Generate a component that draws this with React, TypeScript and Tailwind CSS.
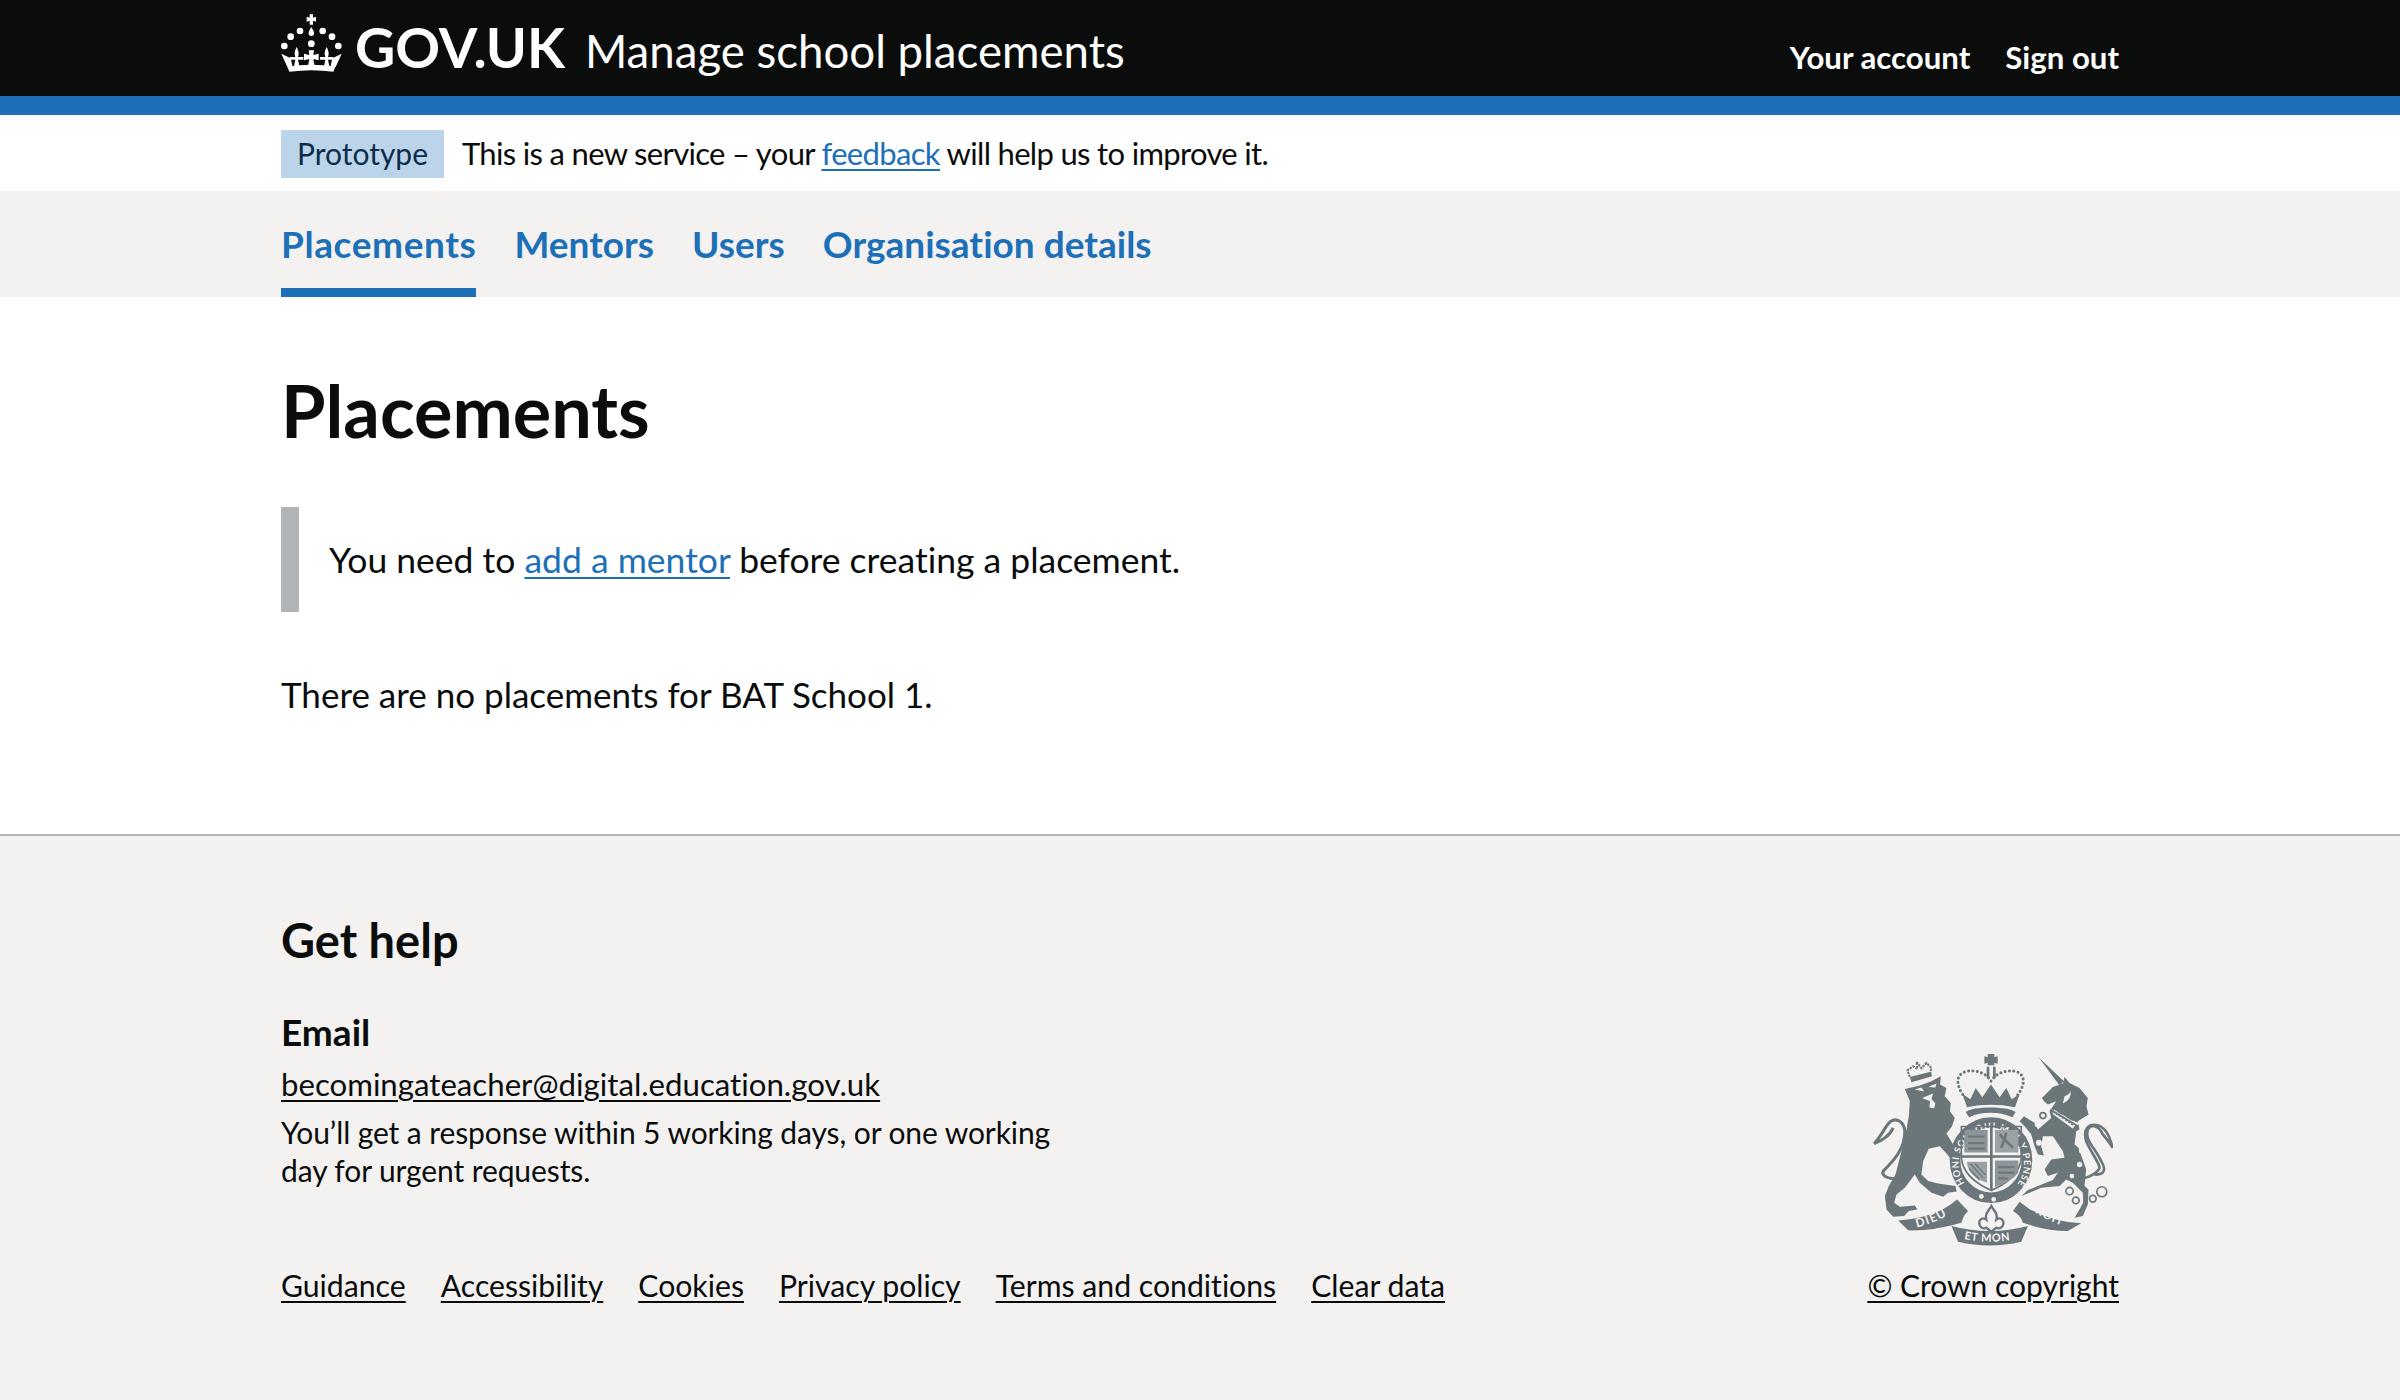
const Crown = () => (
  <svg viewBox="33 39 183 174" className="w-[61px] h-[58px] fill-white shrink-0 mb-[11px]">
    <path d="M119 40h10v10l9-3v15l-9-3v12h-10V59l-9 3V47l9 3z" />
    <path d="M124 78c6 10 8 14 8 19a8 8 0 0 1-16 0c0-5 2-9 8-19z" />
    <circle cx="43" cy="135" r="10" />
    <circle cx="62" cy="107" r="10" />
    <circle cx="90" cy="90" r="10" />
    <circle cx="158" cy="90" r="10" />
    <circle cx="186" cy="107" r="10" />
    <circle cx="205" cy="135" r="10" />
    <circle cx="124" cy="128" r="10" />
    <path d="M52 197Q124 185 196 197L190 212Q124 203 58 212Z" />
    <path d="M34 158L62 172L68 198L52 198Z" />
    <path d="M215 158L187 172L181 198L197 198Z" />
    <path d="M80 138C86 150 88 158 84 168H100V176H84L88 196H72L76 176H60V168H76C72 158 74 150 80 138Z" />
    <path d="M170 138C176 150 178 158 174 168H190V176H174L178 196H162L166 176H150V168H166C162 158 164 150 170 138Z" />
    <path d="M116 148H132L130 162L146 158V178L130 174L134 196H114L118 174L102 178V158L118 162Z" />
  </svg>
);

// royal arms, traced by hand off 3x crops of the picture
const Crest = () => (
  <svg viewBox="70 65 720 580" className="w-[240px] h-[193px] mt-[85px] mr-[6px]" fill="#6b767a">
    <defs>
      <path id="garter" d="M345 457A98 103 0 1 1 505 457" />
      <path id="dieu" d="M195 590Q270 575 325 530" />
      <path id="droit" d="M532 528Q590 572 662 590" />
      <path id="etmon" d="M335 622Q420 642 512 622" />
    </defs>

    {/* lion */}
    <g transform="translate(45 45)">
      <path d="M120 128L165 118L200 105L228 90L226 115L245 125L240 150L258 170L256 195L270 215L262 240L245 262L262 290L285 340L282 352L262 345L248 325L225 300L192 308L175 345L170 385L190 405L220 412L272 420L276 436L250 440L235 452L200 440L165 410L150 385L120 425L95 445L88 470L105 482L150 478L158 490L132 495L118 510L85 512L65 490L60 450L72 420L92 385L105 335L122 265L132 210L135 165Z" />
      <path d="M88 398C60 395 50 385 55 375C85 345 120 310 120 255C118 225 95 215 78 225C60 240 50 270 28 292C50 285 75 268 85 245" fill="none" stroke="#6b767a" strokeWidth="9" />
      <path d="M172 155L205 142L200 158L212 172L208 186L194 184L196 165Z" fill="#f3f2f1" />
      <path d="M150 130L178 136L170 124ZM190 122L215 112L212 124Z" fill="#f3f2f1" />
      <path d="M135 92L128 72L145 60L158 68L155 46L170 66L185 50L200 65L196 82" fill="none" stroke="#6b767a" strokeWidth="6" strokeDasharray="7 3" />
      <path d="M135 92L198 76L202 90L140 108Z" />
    </g>

    {/* unicorn */}
    <g transform="translate(405 45)">
      <path d="M162 33L238 105L225 118Z" />
      <path d="M172 155L205 122L235 112L240 92L255 110L285 125L310 155L306 180L312 205L295 215L280 225L285 250L275 255L270 295L282 305L305 370L300 420L312 430L310 475L295 510L270 515L285 490L296 470L295 440L265 410L245 400L225 420L170 425L135 440L110 450L130 432L160 420L205 402L220 380L190 390L180 370L200 340L240 335L235 315L205 270L175 270L170 300L178 328L160 325L150 300L140 265L120 240L105 225L118 210L150 230L160 250L200 215L195 195L215 165L190 175L178 165Z" />
      <path d="M200 190L206 204L268 250L284 230L260 222L250 216L238 208L225 202L212 192Z" fill="#f3f2f1" />
      <path d="M206 195L268 238" stroke="#6b767a" strokeWidth="5" strokeDasharray="6 5" />
      <path d="M195 192L200 188L282 238L272 256L262 250L272 238L204 198Z" />
      <path d="M240 150Q255 145 258 135Q262 160 235 172Z" fill="#f3f2f1" />
      <path d="M330 385C360 388 366 370 350 345C330 300 300 285 310 250C320 230 345 240 355 265C365 275 378 295 385 305C375 270 365 245 340 237C310 230 295 250 305 285C320 320 345 350 345 365C340 380 310 395 300 395" fill="none" stroke="#6b767a" strokeWidth="8" />
      <circle cx="292" cy="313" r="9" fill="#f3f2f1" />
      <circle cx="285" cy="355" r="8" fill="#f3f2f1" />
      <circle cx="262" cy="390" r="7" fill="#f3f2f1" />
      <g fill="none" stroke="#6b767a" strokeWidth="5">
        <circle cx="255" cy="435" r="11" />
        <circle cx="274" cy="463" r="10" />
        <circle cx="325" cy="458" r="10" />
        <circle cx="352" cy="437" r="15" />
        <circle cx="175" cy="208" r="9" />
      </g>
      <circle cx="163" cy="290" r="9" fill="#f3f2f1" />
      <circle cx="156" cy="236" r="6" fill="#f3f2f1" />
    </g>

    {/* crown */}
    <path d="M414 68h20v10l10-3v22l-10-3v8h-20v-8l-10 3V75l10 3z" />
    <path d="M411 106h8v36h-8zM430 106h8v36h-8z" />
    <path d="M347 200C318 165 315 130 350 120C380 115 410 125 424 150C438 125 470 115 498 120C530 130 528 165 497 200" fill="none" stroke="#6b767a" strokeWidth="9" strokeLinecap="round" strokeDasharray="0.1 13" />
    <path d="M338 188L362 204L378 170L398 198L424 160L450 198L470 170L486 204L510 188L496 228C450 218 395 218 352 228Z" />
    <path d="M348 242C370 224 475 224 498 242L488 258C450 240 395 240 358 258Z" />

    {/* garter and shield */}
    <ellipse cx="424" cy="387" rx="108" ry="113" fill="#f3f2f1" stroke="#6b767a" strokeWidth="32" />
    <text fontSize="28" fill="#f3f2f1" fontFamily="Lato, sans-serif" fontWeight="700" letterSpacing="2.5">
      <textPath href="#garter">HONI SOIT QUI MAL Y PENSE</textPath>
    </text>
    <path d="M335 286H515V380Q510 440 425 478Q340 440 335 380Z" fill="none" stroke="#6b767a" strokeWidth="5" />
    <path d="M421 282h8v196h-8zM335 372h180v8H335z" />
    <path d="M344 296H414V364H344Z" fill="#8d9599" />
    <path d="M436 296H506V364H436Z" fill="#9aa2a5" />
    <path d="M436 388H506V425Q490 448 436 468Z" fill="#8d9599" />
    <path d="M352 392L412 392V455L385 445Q350 420 352 392Z" fill="#9aa2a5" />
    <path d="M355 316h50M355 336h50M355 352h50M445 408h50M445 425h50M445 442h30" stroke="#6b767a" strokeWidth="6" />
    <path d="M450 310L490 350M470 305L455 350" stroke="#6b767a" strokeWidth="8" />
    <path d="M362 398L400 440M376 398L408 432M358 412L390 446" stroke="#6b767a" strokeWidth="4" />
    <circle cx="395" cy="496" r="7" fill="#f3f2f1" />
    <circle cx="432" cy="505" r="7" fill="#f3f2f1" />

    {/* motto scroll */}
    <path d="M145 568Q260 560 322 505L355 540Q340 555 335 575Q250 600 175 598Z" />
    <path d="M305 585Q420 615 535 585L515 632Q420 655 325 632Z" />
    <path d="M510 512Q580 570 695 577L655 600Q590 600 520 575Q515 555 490 540Z" />
    <path d="M425 525C433 540 445 545 440 566C452 556 468 568 458 586C452 596 440 590 440 590L425 602L410 590S398 596 392 586C382 568 398 556 410 566C405 545 417 540 425 525Z" fill="#f3f2f1" stroke="#6b767a" strokeWidth="7" />
    <g fontFamily="Lato, sans-serif" fontWeight="700" fill="#f3f2f1">
      <text fontSize="36" letterSpacing="4"><textPath href="#dieu" startOffset="6">DIEU</textPath></text>
      <text fontSize="34" letterSpacing="3"><textPath href="#droit" startOffset="0">DROIT</textPath></text>
      <text fontSize="33" letterSpacing="2"><textPath href="#etmon" startOffset="8">ET MON</textPath></text>
    </g>
  </svg>
);

const tabs = ['Placements', 'Mentors', 'Users', 'Organisation details'];
const footerLinks = ['Guidance', 'Accessibility', 'Cookies', 'Privacy policy', 'Terms and conditions', 'Clear data'];

export default function App() {
  return (
    <div className="min-h-[1400px] bg-white text-[#0b0c0c] font-['Lato',sans-serif] text-[35px] [font-variant-ligatures:none] flex flex-col">
      <header className="bg-[#0b0c0c] text-white h-[115px] border-b-[19px] border-[#1d70b8]">
        <div className="w-[1838px] mx-auto flex items-center justify-between h-full">
          <div className="flex items-center gap-[13px]">
            <Crown />
            <span className="font-bold text-[55.5px] leading-none mb-[3px]">GOV.UK</span>
            <span className="text-[45.6px] ml-[7px] leading-none mt-[5px]">Manage school placements</span>
          </div>
          <div className="flex gap-[35px] font-bold text-[31.2px] pt-[18px]">
            <span>Your account</span>
            <span>Sign out</span>
          </div>
        </div>
      </header>

      <div className="h-[76px]">
        <div className="w-[1838px] mx-auto flex items-center gap-[18px] h-full text-[31px] pt-[1px]">
          <span className="bg-[#bbd4ea] text-[#0c2d4a] text-[30px] h-[48px] w-[163px] flex items-center justify-center">Prototype</span>
          <span className="tracking-[-0.67px]">
            This is a new service – your <a className="text-[#1d70b8] underline decoration-2 underline-offset-4">feedback</a> will help us to improve it.
          </span>
        </div>
      </div>

      <nav className="bg-[#f3f2f1] h-[106px]">
        <div className="w-[1838px] mx-auto flex gap-[38px] h-full font-bold text-[#1d70b8] text-[37px]">
          {tabs.map((tab, i) => (
            <a key={tab} className={i === 0 ? 'flex items-center border-b-[9px] border-[#1d70b8] pt-[8px] tracking-[0.6px]' : 'flex items-center pb-[9px] pt-[8px]'}>
              {tab}
            </a>
          ))}
        </div>
      </nav>

      <main className="w-[1838px] mx-auto h-[537px] pt-[67px]">
        <h1 className="font-bold text-[72px] leading-[92px]">Placements</h1>
        <div className="mt-[51px] h-[105px] border-l-[18px] border-[#b1b4b6] pl-[30px] flex items-center text-[35.5px]">
          <p>
            You need to <a className="text-[#1d70b8] underline decoration-2 underline-offset-4">add a mentor</a> before creating a placement.
          </p>
        </div>
        <p className="mt-[56px]">There are no placements for BAT School 1.</p>
      </main>

      <footer className="bg-[#f3f2f1] border-t-2 border-[#b1b4b6] flex-1">
        <div className="w-[1838px] mx-auto pt-[77px]">
          <h2 className="font-bold text-[47px] leading-[55px]">Get help</h2>
          <div className="flex justify-between items-start">
            <div>
              <h3 className="font-bold text-[37px] mt-[36px]">Email</h3>
              <a className="block underline decoration-2 underline-offset-4 text-[31.2px] mt-[1px]">becomingateacher@digital.education.gov.uk</a>
              <p className="text-[30px] leading-[38px] w-[800px] mt-[6px] tracking-[-0.1px]">
                You’ll get a response within 5 working days, or one working day for urgent requests.
              </p>
            </div>
            <Crest />
          </div>
          <div className="flex justify-between text-[30.2px] mt-[17px]">
            <div className="flex gap-[35px]">
              {footerLinks.map((link) => (
                <a key={link} className="underline decoration-2 underline-offset-4">{link}</a>
              ))}
            </div>
            <a className="underline decoration-2 underline-offset-4 text-[30px]">© Crown copyright</a>
          </div>
        </div>
      </footer>
    </div>
  );
}
